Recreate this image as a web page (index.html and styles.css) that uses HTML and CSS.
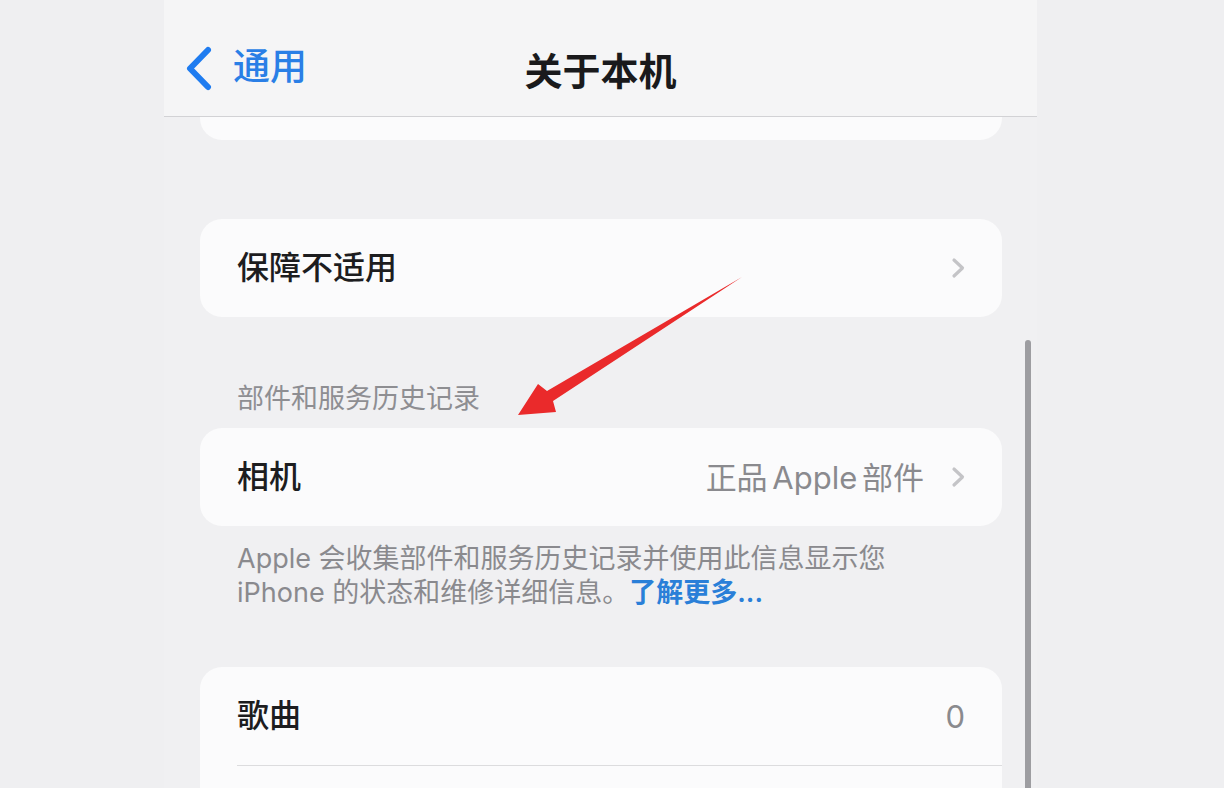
FILE: index.html
```html
<!DOCTYPE html>
<html lang="zh-CN">
<head>
    <meta charset="UTF-8">
    <meta name="viewport" content="width=device-width, initial-scale=1.0">
    <title>关于本机</title>
    <link rel="stylesheet" href="styles.css">
</head>
<body>
  <div class="phone">
    <div class="nav">
        <div class="back">
            <svg class="back-icon" width="27" height="45" viewBox="0 0 27 45">
                <path d="M23 4 L5 22.5 L23 41" fill="none" stroke="#1f7cf0" stroke-width="6" stroke-linecap="round" stroke-linejoin="round"/>
            </svg>
            <span>通用</span>
        </div>
        <h1 class="title">关于本机</h1>
        <div></div>
    </div>

    <div class="content">
        <!-- end of the group above, scrolled under the bar -->
        <div class="card card-tail"></div>

        <div class="card">
            <div class="row">
                <span class="label">保障不适用</span>
                <svg class="chevron" width="15" height="22" viewBox="0 0 15 22">
                    <path d="M3 3 L11.5 11 L3 19" fill="none" stroke="#c4c4c7" stroke-width="3.2" stroke-linecap="round" stroke-linejoin="round"/>
                </svg>
            </div>
        </div>

        <div class="section-title">部件和服务历史记录</div>
        <div class="card">
            <div class="row">
                <span class="label">相机</span>
                <span class="detail">正品 Apple 部件</span>
                <svg class="chevron" width="15" height="22" viewBox="0 0 15 22">
                    <path d="M3 3 L11.5 11 L3 19" fill="none" stroke="#c4c4c7" stroke-width="3.2" stroke-linecap="round" stroke-linejoin="round"/>
                </svg>
            </div>
        </div>
        <p class="footnote">Apple 会收集部件和服务历史记录并使用此信息显示您 iPhone 的状态和维修详细信息。<a href="#">了解更多...</a></p>

        <div class="card">
            <div class="row">
                <span class="label">歌曲</span>
                <span class="detail">0</span>
            </div>
            <div class="row"></div>
        </div>
    </div>

    <div class="scrollbar"></div>

    <svg class="arrow" width="873" height="788" viewBox="164 0 873 788">
        <polygon points="518,415 538,384 547,391 742,277 553,401 556,412" fill="#ea2a2b"/>
    </svg>
  </div>
</body>
</html>
```

FILE: styles.css
```css
body {
    margin: 0;
    background-color: #efeff1;
    font-family: Inter, "Noto Sans CJK SC", sans-serif;
    color: #1d1d1f;
}
.phone {
    position: relative;
    width: 873px;
    height: 788px;
    margin-left: 164px;
    background-color: #f0f0f2;
    overflow: hidden;
}
.nav {
    display: grid;
    grid-template-columns: 1fr auto 1fr;
    align-items: center;
    height: 96px;
    padding-top: 20px;
    background-color: #f5f5f6;
    border-bottom: 1px solid #d2d2d5;
}
.back {
    display: flex;
    align-items: center;
    gap: 21px;
    padding-left: 21px;
    color: #2a7fe6;
    font-size: 37px;
    font-weight: 500;
    line-height: 1;
}
.back span {
    margin-top: -3px;
}
.back-icon {
    display: block;
}
.title {
    margin: 5px 0 0;
    font-size: 38px;
    font-weight: 600;
    line-height: 1;
    color: #1a1a1c;
}
.content {
    padding: 0 35px 0 36px;
}
.card {
    background-color: #fbfbfc;
    border-radius: 22px;
}
.card-tail {
    height: 23px;
    border-radius: 0 0 22px 22px;
    margin-bottom: 79px;
}
.row {
    display: flex;
    align-items: center;
    height: 98px;
    padding: 0 37px;
    font-size: 32px;
    line-height: 1;
}
.row + .row {
    border-top: 1px solid #dcdcde;
    margin-left: 37px;
    padding-left: 0;
}
.label {
    flex-grow: 1;
    font-weight: 500;
}
.detail {
    color: #8a8a8e;
    font-size: 31px;
    word-spacing: -4px;
}
.chevron {
    display: block;
    margin-left: 27px;
    margin-right: -1px;
}
.section-title {
    margin: 65px 0 12px;
    padding-left: 37px;
    font-size: 27px;
    line-height: 34px;
    color: #8e8e92;
}
.footnote {
    max-width: 690px;
    margin: 16px 0 57px;
    padding-left: 37px;
    font-size: 27px;
    line-height: 34px;
    color: #8a8a8e;
}
.footnote a {
    color: #2a7fd8;
    font-weight: 600;
    text-decoration: none;
}
.scrollbar {
    position: absolute;
    left: 861px;
    top: 340px;
    width: 6px;
    height: 470px;
    border-radius: 3px;
    background-color: #9d9da1;
}
.arrow {
    position: absolute;
    left: 0;
    top: 0;
    pointer-events: none;
}
```
